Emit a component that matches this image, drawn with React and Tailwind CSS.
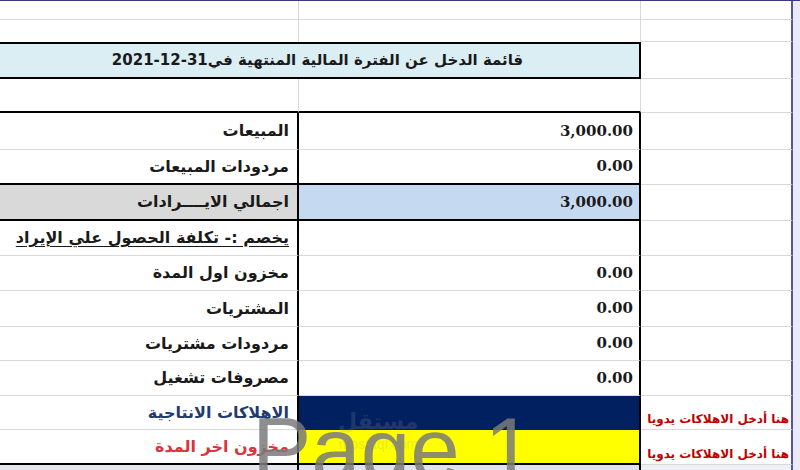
import React from 'react';

const AR = "font-['DejaVu_Sans',sans-serif]";
const NUM = "font-['DejaVu_Serif',serif]";

const rows = [
  { label: 'المبيعات', value: '3,000.00', h: 'h-[37px]' },
  { label: 'مردودات المبيعات', value: '0.00', h: 'h-[35px]', thick: true },
  { label: 'اجمالي الايــــرادات', value: '3,000.00', h: 'h-[36px]', thick: true, lbg: 'bg-[#d9d9d9]', vbg: 'bg-[#c5d9f1]' },
  { label: 'يخصم :- تكلفة الحصول علي الإيراد', value: '', h: 'h-[35px]', underline: true },
  { label: 'مخزون اول المدة', value: '0.00', h: 'h-[35px]' },
  { label: 'المشتريات', value: '0.00', h: 'h-[36px]' },
  { label: 'مردودات مشتريات', value: '0.00', h: 'h-[34px]' },
  { label: 'مصروفات تشغيل', value: '0.00', h: 'h-[35px]' },
  { label: 'الاهلاكات الانتاجية', value: '', h: 'h-[34px]', color: 'text-[#1f3b70]', vbg: 'bg-[#002060]', note: true, noLine: true },
  { label: 'مخزون اخر المدة', value: '', h: 'h-[35px]', color: 'text-[#d8353d]', vbg: 'bg-[#ffff00]', note: true, thick: true },
];

function TableRow({ r }) {
  const lineV = r.thick ? 'border-b-2 border-b-black' : r.noLine ? 'border-b border-b-[#002060]' : 'border-b border-b-[#d9d9d9]';
  return (
    <div className={`flex ${r.h}`}>
      <div className={`w-[299px] shrink-0 border-r-2 border-r-black ${r.thick ? 'border-b-2 border-b-black' : 'border-b border-b-[#d9d9d9]'} ${r.lbg || 'bg-white'} flex items-center justify-end pr-[8px]`}>
        <span dir="rtl" className={`${AR} font-bold text-[16px] ${r.color || 'text-[#1a1a1a]'} ${r.underline ? 'underline underline-offset-[3px]' : ''}`}>{r.label}</span>
      </div>
      <div className={`w-[342px] shrink-0 border-r-2 border-r-black ${lineV} ${r.vbg || 'bg-white'} flex items-center justify-end pr-[6px]`}>
        <span className={`${NUM} font-bold text-[15px] text-[#1a1a1a]`}>{r.value}</span>
      </div>
      <div className="w-[152px] shrink-0 border-r-2 border-r-[#5656a0] border-b border-b-[#d9d9d9] bg-white flex items-end justify-end pr-[2px] pb-[1px]">
        {r.note && (
          <span dir="rtl" className={`${AR} font-bold text-[12px] text-[#c00000]`}>هنا أدخل الاهلاكات يدويا</span>
        )}
      </div>
      <div className="flex-1 bg-[#e9e9f7]" />
    </div>
  );
}

function PlainRow({ h }) {
  return (
    <div className={`flex ${h}`}>
      <div className="w-[299px] shrink-0 border-r border-r-[#d9d9d9] border-b border-b-[#d9d9d9] bg-white" />
      <div className="w-[342px] shrink-0 border-r border-r-[#d9d9d9] border-b border-b-[#d9d9d9] bg-white" />
      <div className="w-[152px] shrink-0 border-r-2 border-r-[#5656a0] border-b border-b-[#d9d9d9] bg-white" />
      <div className="flex-1 bg-[#e9e9f7]" />
    </div>
  );
}

export default function App() {
  return (
    <div className="relative w-[800px] h-[470px] overflow-hidden bg-white border-t border-t-[#3a3a7a]">
      <PlainRow h="h-[19px]" />
      <div className="flex h-[22px]">
        <div className="w-[299px] shrink-0 border-r border-r-[#d9d9d9] bg-white" />
        <div className="w-[342px] shrink-0 border-r border-r-[#d9d9d9] bg-white" />
        <div className="w-[152px] shrink-0 border-r-2 border-r-[#5656a0] border-b border-b-[#d9d9d9] bg-white" />
        <div className="flex-1 bg-[#e9e9f7]" />
      </div>
      <div className="flex h-[37px]">
        <div className="w-[641px] shrink-0 border-y-2 border-r-2 border-black bg-[#daeef3] flex items-center justify-center pr-[4px]">
          <span dir="rtl" className={`${AR} font-bold text-[15px] text-[#1a1a1a]`}>قائمة الدخل عن الفترة المالية المنتهية في31-12-2021</span>
        </div>
        <div className="w-[152px] shrink-0 border-r-2 border-r-[#5656a0] border-b border-b-[#d9d9d9] bg-white" />
        <div className="flex-1 bg-[#e9e9f7]" />
      </div>
      <div className="flex h-[34px]">
        <div className="w-[299px] shrink-0 border-r border-r-[#d9d9d9] border-b-2 border-b-black bg-white" />
        <div className="w-[342px] shrink-0 border-r border-r-[#d9d9d9] border-b-2 border-b-black bg-white" />
        <div className="w-[152px] shrink-0 border-r-2 border-r-[#5656a0] border-b border-b-[#d9d9d9] bg-white" />
        <div className="flex-1 bg-[#e9e9f7]" />
      </div>
      {rows.map((r, i) => (
        <TableRow key={i} r={r} />
      ))}
      <div className="flex h-[10px]">
        <div className="w-[299px] shrink-0 border-r-2 border-r-black bg-[#e6e6ee]" />
        <div className="w-[342px] shrink-0 border-r-2 border-r-black bg-[#dde3f0]" />
        <div className="w-[152px] shrink-0 border-r-2 border-r-[#5656a0] bg-[#eef0f8]" />
        <div className="flex-1 bg-[#e9e9f7]" />
      </div>

      <div className="absolute left-[338px] top-[410px] flex flex-col items-center opacity-20 pointer-events-none">
        <span dir="rtl" className={`${AR} font-bold text-[22px] leading-none text-[#9a9a9a]`}>مستقل</span>
        <span className="font-['Liberation_Sans',sans-serif] text-[14px] leading-none text-[#9a9a9a] mt-[4px]">mostaql.com</span>
      </div>
      <div className="absolute left-[252px] top-[404px] font-['Liberation_Sans',sans-serif] text-[89px] leading-none text-[#7a7a7a]/85 whitespace-nowrap pointer-events-none">
        Page 1
      </div>
    </div>
  );
}
